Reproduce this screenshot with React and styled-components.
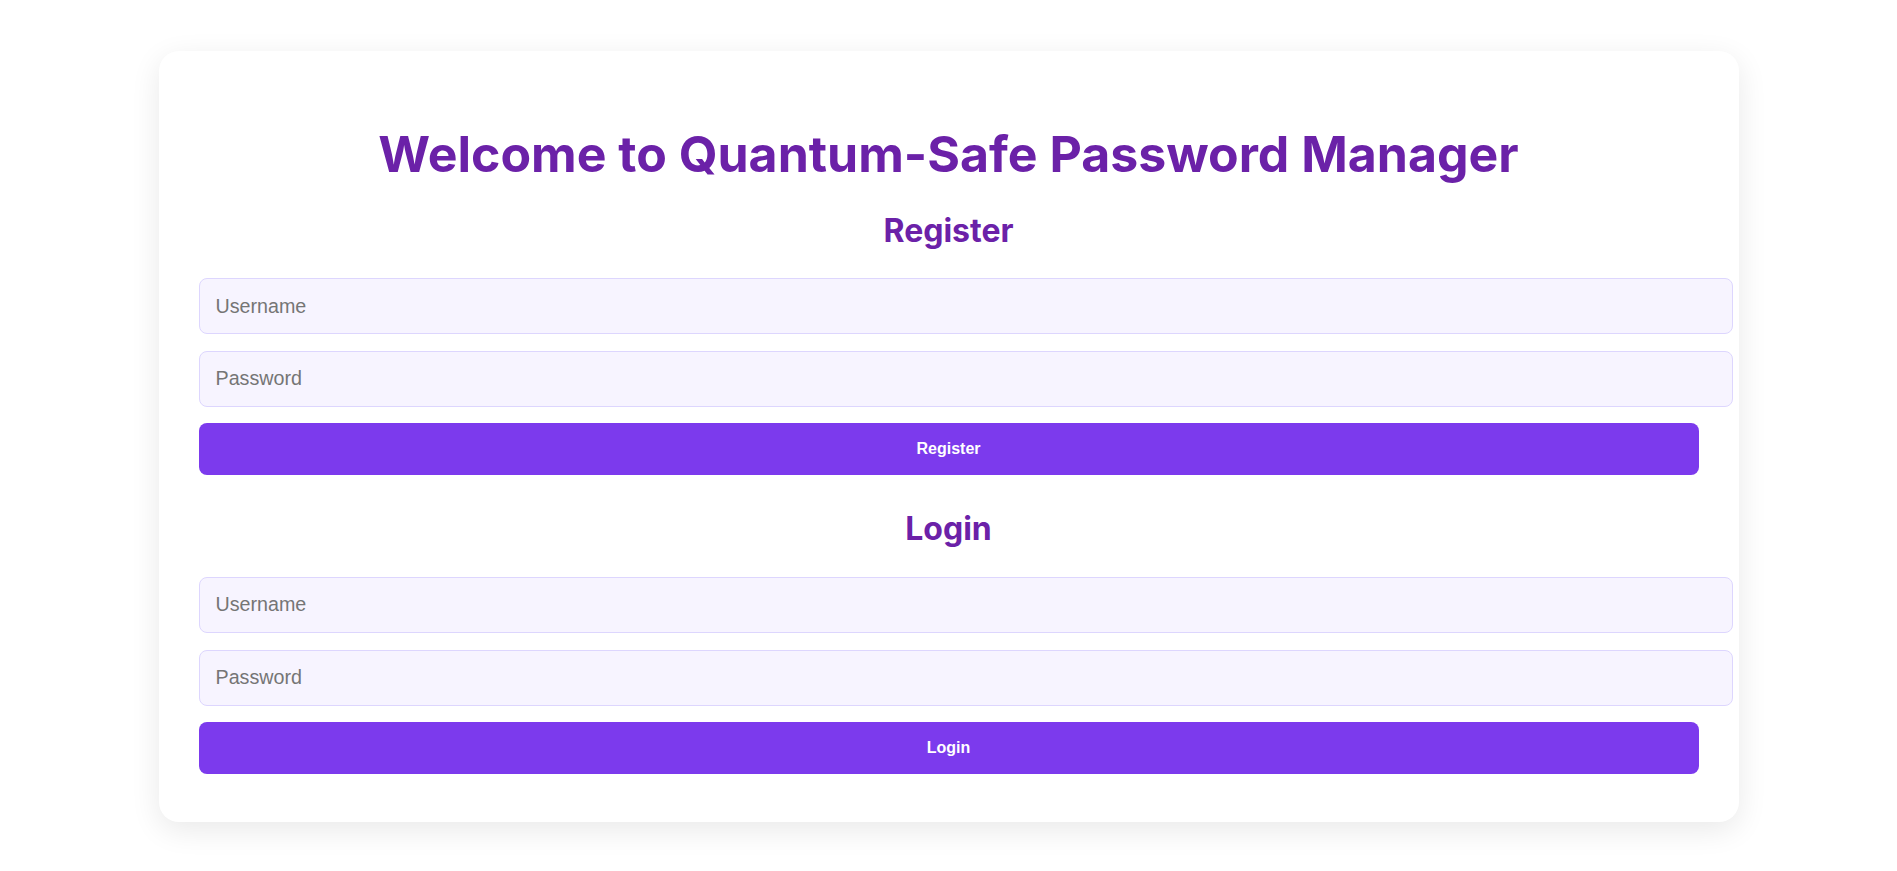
import React from "react";
import styled, { createGlobalStyle } from "styled-components";

const GlobalStyle = createGlobalStyle`
  html, body {
    margin: 0;
    padding: 0;
    background: #ffffff;
  }
  body {
    font-family: Inter, "Liberation Sans", Arial, sans-serif;
  }
`;

const Page = styled.div`
  padding: 51px 0 48px;
  display: flex;
  justify-content: center;
`;

const Card = styled.main`
  width: 1580px;
  box-sizing: border-box;
  padding: 40px;
  background: #ffffff;
  border-radius: 20px;
  box-shadow: 0 8px 30px rgba(0, 0, 0, 0.09);
  display: flex;
  flex-direction: column;
`;

const Title = styled.h1`
  margin: 32.5px 0 0;
  font-family: Inter, "Liberation Sans", sans-serif;
  font-size: 50px;
  line-height: 60px;
  font-weight: 700;
  color: #6b21a8;
  text-align: center;
`;

const SectionTitle = styled.h2`
  margin: ${(p) => p.$top}px 0 28.5px;
  font-family: Inter, "Liberation Sans", sans-serif;
  font-size: 32px;
  line-height: 39px;
  font-weight: 700;
  color: #6b21a8;
  text-align: center;
`;

const Form = styled.form`
  display: flex;
  flex-direction: column;
  gap: 16.7px;
  margin: 0 0 ${(p) => p.$bottom}px;
`;

const Field = styled.input`
  display: block;
  width: 100%;
  box-sizing: content-box;
  margin: 0;
  padding: 16px;
  height: 22px;
  border: 1px solid #ddd6fe;
  border-radius: 8px;
  background: #f7f4ff;
  font-family: "Liberation Sans", Arial, sans-serif;
  font-size: 19.7px;
  color: #333;
  outline: none;

  &::placeholder {
    color: #757575;
  }
`;

const Button = styled.button`
  display: block;
  width: 100%;
  box-sizing: border-box;
  height: 52px;
  margin: 0;
  padding: 0 16px;
  border: none;
  border-radius: 8px;
  background: #7c3aed;
  color: #ffffff;
  font-family: "Liberation Sans", Arial, sans-serif;
  font-size: 16px;
  font-weight: 700;
  cursor: pointer;
`;

function AuthForm({ title, top, bottom, action }) {
  return (
    <>
      <SectionTitle $top={top}>{title}</SectionTitle>
      <Form $bottom={bottom} onSubmit={(e) => e.preventDefault()}>
        <Field type="text" placeholder="Username" />
        <Field type="password" placeholder="Password" />
        <Button type="submit">{action}</Button>
      </Form>
    </>
  );
}

export default function App() {
  return (
    <>
      <GlobalStyle />
      <Page>
        <Card>
          <Title>Welcome to Quantum-Safe Password Manager</Title>
          <AuthForm title="Register" top={27} bottom={0} action="Register" />
          <AuthForm title="Login" top={34} bottom={8} action="Login" />
        </Card>
      </Page>
    </>
  );
}
